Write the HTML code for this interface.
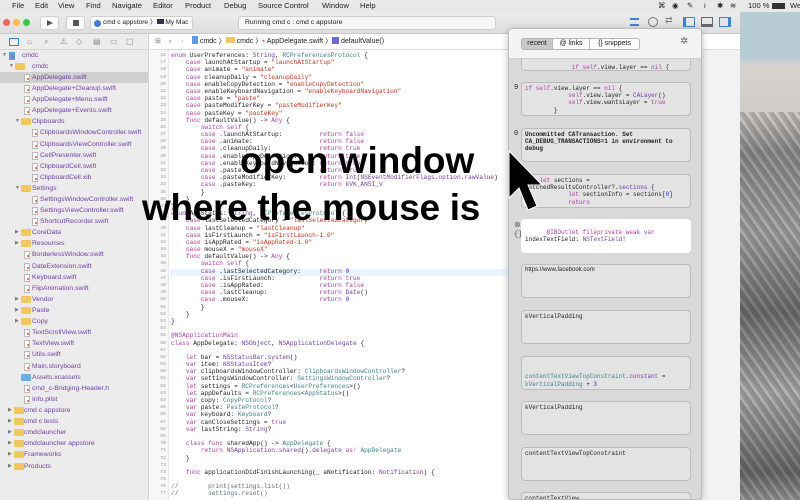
<!DOCTYPE html>
<html><head><meta charset="utf-8">
<style>
*{margin:0;padding:0;box-sizing:border-box}
body{width:800px;height:500px;overflow:hidden;position:relative;background:#fff;font-family:"Liberation Sans",sans-serif;color:#222}
.abs{position:absolute}
#menu{left:0;top:0;width:800px;height:12px;background:#e8e8e8;font-size:7.6px;line-height:12px}
#menu span{position:absolute;top:0}
#tb{left:0;top:12px;width:740px;height:22px;background:linear-gradient(#ececec,#dedede);border-bottom:1px solid #c8c8c8}
.tl{position:absolute;width:7px;height:7px;border-radius:50%;top:7px}
.btn{position:absolute;top:4px;height:14px;background:#fafafa;border:1px solid #cfcfcf;border-radius:3px;white-space:nowrap;overflow:hidden}
#side{left:0;top:34px;width:149px;height:466px;background:#ececec;border-right:1px solid #d2d2d2}
.r{position:absolute;left:0;width:148px;height:11px;font-size:6.8px;line-height:11px;white-space:nowrap}
.r .a{position:absolute;top:0;font-size:5px;color:#777}
.r .f{position:absolute;top:2px;width:10px;height:7px;background:#f3c85a;border-radius:1px}
.r .d{position:absolute;top:1.5px;width:6px;height:8px;background:#fff;border:0.5px solid #bbb}
.r .d:after{content:"";position:absolute;left:1.5px;top:3px;width:2px;height:2px;background:#e2572e;border-radius:1px}
.r .t{position:absolute;top:0}
#jb{left:150px;top:34px;width:590px;height:16px;background:#fff;border-bottom:1px solid #ddd;font-size:7px;line-height:16px;white-space:nowrap}
#gut{left:150px;top:50px;width:19px;height:450px;background:#f7f7f7;border-right:1px solid #e8e8e8}
#code{left:150px;top:52px;width:560px;height:448px;overflow:hidden;font-family:"Liberation Mono",monospace;font-size:6.2px;color:#222}
.l{height:7.2px;line-height:7.2px;white-space:pre;position:relative}
.l i{position:absolute;left:0;width:16px;text-align:right;font-style:normal;color:#999;font-size:4.8px}
.l b{font-weight:normal;position:absolute;left:21px}
.k{color:#ad3da4}.s{color:#d12f1b}.t{color:#703daa}.p{color:#3e8087}.n{color:#272ad8}.c{color:#5d6c79}
#right{left:700px;top:50px;width:40px;height:450px;background:#f2f2f2;border-left:1px solid #ddd}
#desk{left:740px;top:12px;width:60px;height:488px;overflow:hidden;background:linear-gradient(#b8ccd4 0,#b8ccd4 45px,#d6d3cf 55px,#cfcbc6 100px,#8f8e8c 140px,#a9a7a4 220px,#6f6e6c 300px,#b2b0ad 380px,#6a6967 460px,#9a9896 488px)}
#desk:after{content:"";position:absolute;left:0;top:100px;width:60px;height:388px;background:repeating-linear-gradient(55deg,rgba(40,40,40,.25) 0 2px,rgba(255,255,255,.05) 2px 5px,rgba(0,0,0,.15) 5px 8px)}
#pop{left:508px;top:28px;width:194px;height:472px;background:#d9d9d9;border:1px solid #bdbdbd;border-radius:4px;box-shadow:0 2px 8px rgba(0,0,0,.25);overflow:hidden}
#ph{position:absolute;left:0;top:0;width:194px;height:30px;background:#f4f4f4;border-bottom:1px solid #ccc;z-index:2}
.seg{position:absolute;top:9px;height:12px;border:1px solid #b5b5b5;font-size:7px;line-height:10px;text-align:center;background:#fbfbfb;white-space:nowrap}
.card{position:absolute;left:12px;width:170px;height:34px;background:#e3e3e3;border:1px solid #bcbcbc;border-radius:4px;font-family:"Liberation Mono",monospace;font-size:6px;line-height:7.2px;padding:2px 3px;white-space:pre;overflow:hidden}
.num{position:absolute;left:5px;font-family:"Liberation Mono",monospace;font-size:7px}
#big{left:0;top:0;width:800px;height:500px;font-family:"Liberation Sans",sans-serif;font-weight:bold;color:#000;pointer-events:none}
</style></head><body>

<div id="menu" class="abs">
<span style="left:4px;font-size:9px"></span>
<span style="left:12px">File</span><span style="left:35px">Edit</span><span style="left:58px">View</span><span style="left:86px">Find</span><span style="left:112px">Navigate</span><span style="left:153px">Editor</span><span style="left:185px">Product</span><span style="left:224px">Debug</span><span style="left:258px">Source Control</span><span style="left:322px">Window</span><span style="left:360px">Help</span>
<span style="left:658px">⌘</span><span style="left:672px">◉</span><span style="left:687px">✎</span><span style="left:704px">i</span><span style="left:717px">✱</span><span style="left:730px">≋</span><span style="left:748px">100 %</span><span style="left:772px;top:3px;width:13px;height:6px;border:1px solid #333;background:#333"></span><span style="left:790px">We</span>
</div>

<div id="tb" class="abs">
<div class="tl" style="left:3px;background:#fc605c"></div>
<div class="tl" style="left:13px;background:#fdbc40"></div>
<div class="tl" style="left:23px;background:#34c84a"></div>
<div class="btn" style="left:40px;width:19px"><div style="position:absolute;left:6px;top:3px;border-left:6px solid #555;border-top:3.5px solid transparent;border-bottom:3.5px solid transparent"></div></div>
<div class="btn" style="left:66px;width:19px"><div style="position:absolute;left:6px;top:3px;width:6px;height:6px;background:#555"></div></div>
<div class="btn" style="left:90px;width:103px;font-size:6.6px;line-height:12px;padding-left:12px"><span style="position:absolute;left:3px;top:3px;width:7px;height:7px;border-radius:50%;background:#3a7fd5"></span>cmd c appstore 〉<span style="display:inline-block;width:7px;height:5px;background:#335"></span> My Mac</div>
<div class="btn" style="left:238px;width:258px;font-size:6.8px;line-height:12px;padding-left:6px;background:#f6f6f6">Running cmd c : cmd c appstore</div>
<div class="abs" style="left:630px;top:6px;width:9px;height:8px;border-top:2px solid #3a83e0;border-bottom:2px solid #3a83e0"></div>
<div class="abs" style="left:648px;top:5px;width:10px;height:10px;border:1px solid #777;border-radius:50%"></div>
<div class="abs" style="left:665px;top:3px;font-size:9px;color:#777">⇄</div>
<div class="abs" style="left:683px;top:5px;width:12px;height:10px;border:1.5px solid #3a83e0;border-left-width:3px"></div>
<div class="abs" style="left:701px;top:5px;width:12px;height:10px;border:1.5px solid #666;border-bottom-width:3px"></div>
<div class="abs" style="left:719px;top:5px;width:12px;height:10px;border:1.5px solid #3a83e0;border-right-width:3px"></div>
</div>

<div id="side" class="abs">
<div class="abs" style="left:0;top:0;width:148px;height:16px;border-bottom:1px solid #d6d6d6;font-size:8px;color:#888;line-height:16px">
<span class="abs" style="left:9px;top:4px;width:10px;height:8px;border:1.5px solid #3a83e0"></span>
<span class="abs" style="left:27px">⌂</span><span class="abs" style="left:44px">⌕</span><span class="abs" style="left:60px">⚠</span><span class="abs" style="left:76px">◇</span><span class="abs" style="left:93px">▤</span><span class="abs" style="left:110px">▭</span><span class="abs" style="left:126px">▢</span>
</div>
<div class="abs" style="left:0;top:38px;width:148px;height:11px;background:#d0d0d0"></div>
</div>
<div id="rows">
<div class="r" style="top:50px"><span class="a" style="left:2px">▼</span><span class="d" style="left:9px;background:#5b9be8;border-color:#5b9be8"></span><span class="t" style="left:22px">cmdc</span></div>
<div class="r" style="top:61px"><span class="a" style="left:9px">▼</span><span class="f" style="left:15px"></span><span class="t" style="left:32px">cmdc</span></div>
<div class="r" style="top:72px"><span class="d" style="left:24px"></span><span class="t" style="left:32px">AppDelegate.swift</span></div>
<div class="r" style="top:83px"><span class="d" style="left:24px"></span><span class="t" style="left:32px">AppDelegate+Cleanup.swift</span></div>
<div class="r" style="top:94px"><span class="d" style="left:24px"></span><span class="t" style="left:32px">AppDelegate+Menu.swift</span></div>
<div class="r" style="top:105px"><span class="d" style="left:24px"></span><span class="t" style="left:32px">AppDelegate+Events.swift</span></div>
<div class="r" style="top:116px"><span class="a" style="left:15px">▼</span><span class="f" style="left:21px"></span><span class="t" style="left:32px">Clipboards</span></div>
<div class="r" style="top:127px"><span class="d" style="left:32px"></span><span class="t" style="left:40px">ClipboardsWindowController.swift</span></div>
<div class="r" style="top:139px"><span class="d" style="left:32px"></span><span class="t" style="left:40px">ClipboardsViewController.swift</span></div>
<div class="r" style="top:150px"><span class="d" style="left:32px"></span><span class="t" style="left:40px">CellPresenter.swift</span></div>
<div class="r" style="top:161px"><span class="d" style="left:32px"></span><span class="t" style="left:40px">ClipboardCell.swift</span></div>
<div class="r" style="top:172px"><span class="d" style="left:32px"></span><span class="t" style="left:40px">ClipboardCell.xib</span></div>
<div class="r" style="top:183px"><span class="a" style="left:15px">▼</span><span class="f" style="left:21px"></span><span class="t" style="left:32px">Settings</span></div>
<div class="r" style="top:194px"><span class="d" style="left:32px"></span><span class="t" style="left:40px">SettingsWindowController.swift</span></div>
<div class="r" style="top:205px"><span class="d" style="left:32px"></span><span class="t" style="left:40px">SettingsViewController.swift</span></div>
<div class="r" style="top:216px"><span class="d" style="left:32px"></span><span class="t" style="left:40px">ShortcutRecorder.swift</span></div>
<div class="r" style="top:227px"><span class="a" style="left:15px">▶</span><span class="f" style="left:21px"></span><span class="t" style="left:32px">CoreData</span></div>
<div class="r" style="top:238px"><span class="a" style="left:15px">▶</span><span class="f" style="left:21px"></span><span class="t" style="left:32px">Resources</span></div>
<div class="r" style="top:249px"><span class="d" style="left:24px"></span><span class="t" style="left:32px">BorderlessWindow.swift</span></div>
<div class="r" style="top:261px"><span class="d" style="left:24px"></span><span class="t" style="left:32px">DateExtension.swift</span></div>
<div class="r" style="top:272px"><span class="d" style="left:24px"></span><span class="t" style="left:32px">Keyboard.swift</span></div>
<div class="r" style="top:283px"><span class="d" style="left:24px"></span><span class="t" style="left:32px">FlipAnimation.swift</span></div>
<div class="r" style="top:294px"><span class="a" style="left:15px">▶</span><span class="f" style="left:21px"></span><span class="t" style="left:32px">Vendor</span></div>
<div class="r" style="top:305px"><span class="a" style="left:15px">▶</span><span class="f" style="left:21px"></span><span class="t" style="left:32px">Paste</span></div>
<div class="r" style="top:316px"><span class="a" style="left:15px">▶</span><span class="f" style="left:21px"></span><span class="t" style="left:32px">Copy</span></div>
<div class="r" style="top:327px"><span class="d" style="left:24px"></span><span class="t" style="left:32px">TextScrollView.swift</span></div>
<div class="r" style="top:338px"><span class="d" style="left:24px"></span><span class="t" style="left:32px">TextView.swift</span></div>
<div class="r" style="top:349px"><span class="d" style="left:24px"></span><span class="t" style="left:32px">Utils.swift</span></div>
<div class="r" style="top:361px"><span class="d" style="left:24px"></span><span class="t" style="left:32px">Main.storyboard</span></div>
<div class="r" style="top:372px"><span class="f" style="left:21px;background:#6aaee8"></span><span class="t" style="left:32px">Assets.xcassets</span></div>
<div class="r" style="top:383px"><span class="d" style="left:24px"></span><span class="t" style="left:32px">cmd_c-Bridging-Header.h</span></div>
<div class="r" style="top:394px"><span class="d" style="left:24px"></span><span class="t" style="left:32px">Info.plist</span></div>
<div class="r" style="top:405px"><span class="a" style="left:8px">▶</span><span class="f" style="left:14px"></span><span class="t" style="left:24px">cmd c appstore</span></div>
<div class="r" style="top:416px"><span class="a" style="left:8px">▶</span><span class="f" style="left:14px"></span><span class="t" style="left:24px">cmd c tests</span></div>
<div class="r" style="top:427px"><span class="a" style="left:8px">▶</span><span class="f" style="left:14px"></span><span class="t" style="left:24px">cmdclauncher</span></div>
<div class="r" style="top:438px"><span class="a" style="left:8px">▶</span><span class="f" style="left:14px"></span><span class="t" style="left:24px">cmdclauncher appstore</span></div>
<div class="r" style="top:449px"><span class="a" style="left:8px">▶</span><span class="f" style="left:14px"></span><span class="t" style="left:24px">Frameworks</span></div>
<div class="r" style="top:461px"><span class="a" style="left:8px">▶</span><span class="f" style="left:14px"></span><span class="t" style="left:24px">Products</span></div>
</div>

<div id="jb" class="abs">
<span class="abs" style="left:5px;color:#777">⊞</span><span class="abs" style="left:19px;color:#555">‹</span><span class="abs" style="left:31px;color:#aaa">›</span>
<span class="abs" style="left:42px"><span style="display:inline-block;width:6px;height:8px;background:#5b9be8;vertical-align:-1px"></span> cmdc 〉<span style="display:inline-block;width:9px;height:6px;background:#f3c85a"></span> cmdc 〉<span style="color:#e2572e">▪</span> AppDelegate.swift 〉<span style="display:inline-block;width:7px;height:7px;background:#6a6ad8;vertical-align:-1px"></span> defaultValue()</span>
</div>
<div id="gut" class="abs"></div>
<div class="abs" style="left:170px;top:269px;width:530px;height:7px;background:#ecf5ff"></div>
<div id="right" class="abs"></div>

<div id="code" class="abs">
<div class="l"><i>16</i><b><span class="k">enum</span> UserPreferences: <span class="t">String</span>, <span class="p">RCPreferencesProtocol</span> {</b></div>
<div class="l"><i>17</i><b>    <span class="k">case</span> launchAtStartup = <span class="s">"launchAtStartup"</span></b></div>
<div class="l"><i>18</i><b>    <span class="k">case</span> animate = <span class="s">"animate"</span></b></div>
<div class="l"><i>19</i><b>    <span class="k">case</span> cleanupDaily = <span class="s">"cleanupDaily"</span></b></div>
<div class="l"><i>20</i><b>    <span class="k">case</span> enableCopyDetection = <span class="s">"enableCopyDetection"</span></b></div>
<div class="l"><i>21</i><b>    <span class="k">case</span> enableKeyboardNavigation = <span class="s">"enableKeyboardNavigation"</span></b></div>
<div class="l"><i>22</i><b>    <span class="k">case</span> paste = <span class="s">"paste"</span></b></div>
<div class="l"><i>23</i><b>    <span class="k">case</span> pasteModifierKey = <span class="s">"pasteModifierKey"</span></b></div>
<div class="l"><i>24</i><b>    <span class="k">case</span> pasteKey = <span class="s">"pasteKey"</span></b></div>
<div class="l"><i>25</i><b>    <span class="k">func</span> defaultValue() -> <span class="k">Any</span> {</b></div>
<div class="l"><i>26</i><b>        <span class="k">switch self</span> {</b></div>
<div class="l"><i>27</i><b>        <span class="k">case</span> .launchAtStartup:          <span class="k">return false</span></b></div>
<div class="l"><i>28</i><b>        <span class="k">case</span> .animate:                  <span class="k">return false</span></b></div>
<div class="l"><i>29</i><b>        <span class="k">case</span> .cleanupDaily:             <span class="k">return true</span></b></div>
<div class="l"><i>30</i><b>        <span class="k">case</span> .enableCopyDetection:      <span class="k">return true</span></b></div>
<div class="l"><i>31</i><b>        <span class="k">case</span> .enableKeyboardNavigation: <span class="k">return true</span></b></div>
<div class="l"><i>32</i><b>        <span class="k">case</span> .paste:                    <span class="k">return true</span></b></div>
<div class="l"><i>33</i><b>        <span class="k">case</span> .pasteModifierKey:         <span class="k">return</span> <span class="t">Int</span>(<span class="t">NSEventModifierFlags</span>.<span class="t">option</span>.<span class="t">rawValue</span>)</b></div>
<div class="l"><i>34</i><b>        <span class="k">case</span> .pasteKey:                 <span class="k">return</span> <span class="t">kVK_ANSI_V</span></b></div>
<div class="l"><i>35</i><b>        }</b></div>
<div class="l"><i>36</i><b>    }</b></div>
<div class="l"><i>37</i><b>}</b></div>
<div class="l"><i>38</i><b><span class="k">enum</span> AppStatus: <span class="t">String</span>, <span class="p">RCPreferencesProtocol</span> {</b></div>
<div class="l"><i>39</i><b>    <span class="k">case</span> lastSelectedCategory = <span class="s">"lastSelectedCategory"</span></b></div>
<div class="l"><i>40</i><b>    <span class="k">case</span> lastCleanup = <span class="s">"lastCleanup"</span></b></div>
<div class="l"><i>41</i><b>    <span class="k">case</span> isFirstLaunch = <span class="s">"isFirstLaunch-1.0"</span></b></div>
<div class="l"><i>42</i><b>    <span class="k">case</span> isAppRated = <span class="s">"isAppRated-1.0"</span></b></div>
<div class="l"><i>43</i><b>    <span class="k">case</span> mouseX = <span class="s">"mouseX"</span></b></div>
<div class="l"><i>44</i><b>    <span class="k">func</span> defaultValue() -> <span class="k">Any</span> {</b></div>
<div class="l"><i>45</i><b>        <span class="k">switch self</span> {</b></div>
<div class="l"><i>46</i><b>        <span class="k">case</span> .lastSelectedCategory:     <span class="k">return</span> <span class="n">0</span></b></div>
<div class="l"><i>47</i><b>        <span class="k">case</span> .isFirstLaunch:            <span class="k">return true</span></b></div>
<div class="l"><i>48</i><b>        <span class="k">case</span> .isAppRated:               <span class="k">return false</span></b></div>
<div class="l"><i>49</i><b>        <span class="k">case</span> .lastCleanup:              <span class="k">return</span> <span class="t">Date</span>()</b></div>
<div class="l"><i>50</i><b>        <span class="k">case</span> .mouseX:                   <span class="k">return</span> <span class="n">0</span></b></div>
<div class="l"><i>51</i><b>        }</b></div>
<div class="l"><i>52</i><b>    }</b></div>
<div class="l"><i>53</i><b>}</b></div>
<div class="l"><i>54</i><b></b></div>
<div class="l"><i>55</i><b><span class="k">@NSApplicationMain</span></b></div>
<div class="l"><i>56</i><b><span class="k">class</span> AppDelegate: <span class="t">NSObject</span>, <span class="t">NSApplicationDelegate</span> {</b></div>
<div class="l"><i>57</i><b></b></div>
<div class="l"><i>58</i><b>    <span class="k">let</span> bar = <span class="t">NSStatusBar</span>.<span class="t">system</span>()</b></div>
<div class="l"><i>59</i><b>    <span class="k">var</span> item: <span class="t">NSStatusItem</span>?</b></div>
<div class="l"><i>60</i><b>    <span class="k">var</span> clipboardsWindowController: <span class="p">ClipboardsWindowController</span>?</b></div>
<div class="l"><i>61</i><b>    <span class="k">var</span> settingsWindowController: <span class="p">SettingsWindowController</span>?</b></div>
<div class="l"><i>62</i><b>    <span class="k">let</span> settings = <span class="p">RCPreferences</span>&lt;<span class="p">UserPreferences</span>&gt;()</b></div>
<div class="l"><i>63</i><b>    <span class="k">let</span> appDefaults = <span class="p">RCPreferences</span>&lt;<span class="p">AppStatus</span>&gt;()</b></div>
<div class="l"><i>64</i><b>    <span class="k">var</span> copy: <span class="p">CopyProtocol</span>?</b></div>
<div class="l"><i>65</i><b>    <span class="k">var</span> paste: <span class="p">PasteProtocol</span>?</b></div>
<div class="l"><i>66</i><b>    <span class="k">var</span> keyboard: <span class="p">Keyboard</span>?</b></div>
<div class="l"><i>67</i><b>    <span class="k">var</span> canCloseSettings = <span class="k">true</span></b></div>
<div class="l"><i>68</i><b>    <span class="k">var</span> lastString: <span class="t">String</span>?</b></div>
<div class="l"><i>69</i><b></b></div>
<div class="l"><i>70</i><b>    <span class="k">class func</span> sharedApp() -> <span class="p">AppDelegate</span> {</b></div>
<div class="l"><i>71</i><b>        <span class="k">return</span> <span class="t">NSApplication</span>.<span class="t">shared</span>().<span class="t">delegate</span> <span class="k">as!</span> <span class="p">AppDelegate</span></b></div>
<div class="l"><i>72</i><b>    }</b></div>
<div class="l"><i>73</i><b></b></div>
<div class="l"><i>74</i><b>    <span class="k">func</span> applicationDidFinishLaunching(_ aNotification: <span class="t">Notification</span>) {</b></div>
<div class="l"><i>75</i><b></b></div>
<div class="l"><i>76</i><b><span class="c">//        print(settings.list())</span></b></div>
<div class="l"><i>77</i><b><span class="c">//        settings.reset()</span></b></div>
</div>

<div id="desk" class="abs"></div>

<div id="pop" class="abs">
<div id="ph">
<div class="seg" style="left:12px;width:32px;background:#c9c9c9;border-radius:3px 0 0 3px">recent</div>
<div class="seg" style="left:44px;width:37px;border-left:none">@ links</div>
<div class="seg" style="left:81px;width:50px;border-left:none;border-radius:0 3px 3px 0">{} snippets</div>
<div class="abs" style="left:171px;top:7px;font-size:10px;color:#666">✲</div>
</div>
<div class="card" style="top:8px;padding-top:26px">             <span class="k">if self</span>.view.layer == <span class="k">nil</span> {</div>
<div class="num" style="top:55px">9</div>
<div class="card" style="top:53px"><span class="k">if self</span>.view.layer == <span class="k">nil</span> {
            <span class="k">self</span>.view.layer = <span class="t">CALayer</span>()
            <span class="k">self</span>.view.wantsLayer = <span class="k">true</span>
        }</div>
<div class="num" style="top:101px">0</div>
<div class="card" style="top:99px;font-weight:bold">Uncommitted CATransaction. Set
CA_DEBUG_TRANSACTIONS=1 in environment to
debug</div>
<div class="card" style="top:145px">    <span class="k">let</span> sections =
fetchedResultsController?.<span class="t">sections</span> {
            <span class="k">let</span> sectionInfo = sections[<span class="n">0</span>]
            <span class="k">return</span></div>
<div class="num" style="top:191px;font-size:8px;color:#666">⊗</div>
<div class="num" style="top:202px;color:#444">{}</div>
<div class="card" style="top:190px;background:#fff;border-color:#fff">
      <span class="k">@IBOutlet fileprivate weak var</span>
indexTextField: <span class="t">NSTextField</span>!</div>
<div class="card" style="top:235px;font-family:'Liberation Sans',sans-serif">https://www.facebook.com</div>
<div class="card" style="top:281px">kVerticalPadding</div>
<div class="card" style="top:327px">

<span class="p">contentTextViewTopConstraint</span>.<span class="t">constant</span> =
<span class="p">kVerticalPadding</span> + <span class="n">3</span></div>
<div class="card" style="top:372px">kVerticalPadding</div>
<div class="card" style="top:418px">contentTextViewTopConstraint</div>
<div class="card" style="top:463px">contentTextView</div>
</div>

<div id="big" class="abs">
<div class="abs" style="left:240px;top:140px;font-size:37px;white-space:nowrap">open window</div>
<div class="abs" style="left:142px;top:187px;font-size:37px;letter-spacing:-0.3px;white-space:nowrap">where the mouse is</div>
<svg class="abs" style="left:0;top:0" width="800" height="500"><polygon points="509,151 509,198 519,188 528,210 537,206 528,185 542,185" fill="#000" stroke="#fff" stroke-width="1"/></svg>
</div>
</body></html>
